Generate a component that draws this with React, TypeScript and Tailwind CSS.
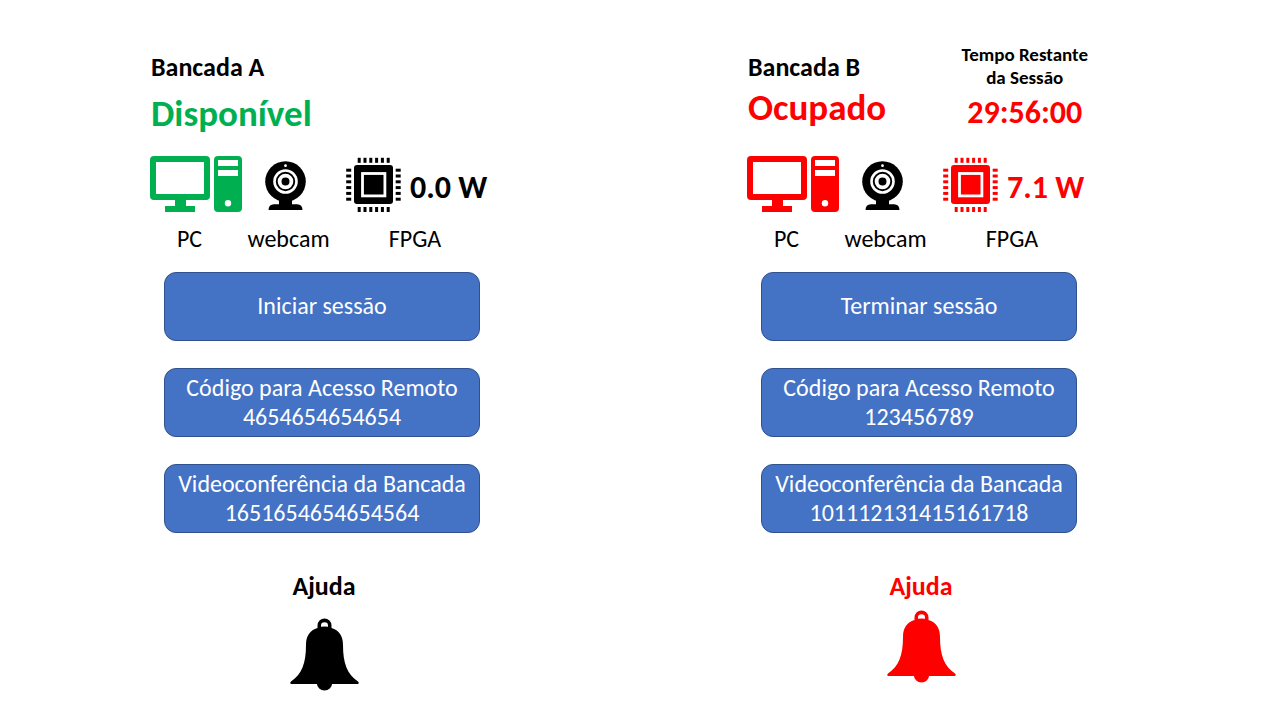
type IconProps = { className?: string };

function PcIcon({ className = "" }: IconProps) {
  return (
    <svg viewBox="0 0 92 56" width="92" height="56" fill="currentColor" fillRule="evenodd" className={className} aria-hidden="true">
      <path d="M4 0H56a4 4 0 0 1 4 4V40a4 4 0 0 1-4 4H36V50H45V56H15V50H25V44H4a4 4 0 0 1-4-4V4a4 4 0 0 1 4-4ZM6 6V38H54V6Z" />
      <path d="M68 0H88a4 4 0 0 1 4 4V52a4 4 0 0 1-4 4H68a4 4 0 0 1-4-4V4a4 4 0 0 1 4-4ZM68 4V10H88V4ZM68 14V20H88V14ZM78 44a3.2 3.2 0 1 0 0 6.4a3.2 3.2 0 1 0 0-6.4Z" />
    </svg>
  );
}

function WebcamIcon() {
  return (
    <svg viewBox="0 0 41 50" width="41" height="50" aria-hidden="true">
      <circle cx="20.5" cy="20.5" r="20.3" />
      <path d="M14 38H27V43.2H32Q37.5 43.5 37.5 49H3.5Q3.5 43.5 9 43.2H14Z" />
      <circle cx="20.5" cy="20.5" r="11" fill="none" stroke="#fff" strokeWidth="2.6" />
      <circle cx="20.5" cy="20.5" r="5.9" fill="none" stroke="#fff" strokeWidth="3.8" />
      <circle cx="20.5" cy="4.7" r="1.4" fill="#fff" />
    </svg>
  );
}

const pins = [11.7, 17.5, 23.3, 29.1, 34.9, 40.7];

function ChipIcon({ className = "" }: IconProps) {
  return (
    <svg viewBox="0 0 56 56" width="56" height="56" fill="currentColor" className={className} aria-hidden="true">
      <rect x="8" y="8" width="39" height="39" rx="3" />
      <rect x="16.5" y="16.5" width="22.4" height="22.4" fill="none" stroke="#fff" strokeWidth="2.8" />
      {pins.map((p) => (
        <g key={p}>
          <rect x={p} y="0.8" width="3" height="5" />
          <rect x={p} y="50" width="3" height="5" />
          <rect x="0.2" y={p} width="5" height="3" />
          <rect x="49.7" y={p} width="5" height="3" />
        </g>
      ))}
    </svg>
  );
}

function BellIcon() {
  return (
    <svg viewBox="0 0 69 73" width="69" height="73" fill="currentColor" aria-hidden="true">
      <path
        fillRule="evenodd"
        d="M27.5 10V7.5a7 7 0 0 1 14 0V10C49 12 53 18 53 27C53 45 57 56 68 63.5Q69.5 65 68 66H42a7.5 6.5 0 0 1-15 0H1Q-.5 65 1 63.5C12 56 16 45 16 27C16 18 20 12 27.5 10ZM31 8.8Q34.5 8 38 8.8V7.5a3.5 3.2 0 0 0-7 0Z"
      />
    </svg>
  );
}

type Bench = {
  name: string;
  status: string;
  statusClass: string;
  headerClass: string;
  busyClass: string;
  power: string;
  remaining?: string;
  action: string;
  remoteCode: string;
  videoCode: string;
  helpClass: string;
};

const benches: Bench[] = [
  {
    name: "Bancada A",
    status: "Disponível",
    statusClass: "text-[#00b050]",
    headerClass: "gap-2.5",
    busyClass: "text-black",
    power: "0.0 W",
    action: "Iniciar sessão",
    remoteCode: "4654654654654",
    videoCode: "1651654654654564",
    helpClass: "gap-4 text-black",
  },
  {
    name: "Bancada B",
    status: "Ocupado",
    statusClass: "text-[#ff0000]",
    headerClass: "gap-1",
    busyClass: "text-[#ff0000]",
    power: "7.1 W",
    remaining: "29:56:00",
    action: "Terminar sessão",
    remoteCode: "123456789",
    videoCode: "101112131415161718",
    helpClass: "gap-2 text-[#ff0000]",
  },
];

const buttonClass =
  "flex h-[69px] w-full cursor-pointer flex-col items-center justify-center rounded-xl border border-[#2f528f] bg-[#4472c4] pb-0.5 text-2xl leading-[29px] whitespace-nowrap text-white";

function BenchPanel({ bench }: { bench: Bench }) {
  return (
    <section className="flex flex-col">
      <header className="flex h-[111px] justify-between pr-[7px] pl-px">
        <div className={`flex flex-col pt-2 ${bench.headerClass}`}>
          <h2 className="text-[26px] leading-8 font-bold">{bench.name}</h2>
          <p className={`text-[37px] leading-[42px] font-bold ${bench.statusClass}`}>{bench.status}</p>
        </div>
        {bench.remaining && (
          <div className="flex flex-col items-center text-center font-bold">
            <p className="text-[19px] leading-[23px]">
              Tempo Restante
              <br />
              da Sessão
            </p>
            <p className="pt-1.5 text-[32px] leading-9 text-[#ff0000]">{bench.remaining}</p>
          </div>
        )}
      </header>

      <div className="flex h-[60px] items-center">
        <PcIcon className={bench.statusClass} />
        <div className="pt-1 pl-[23px]">
          <WebcamIcon />
        </div>
        <div className={`flex items-center gap-2 pt-0.5 pl-10 ${bench.busyClass}`}>
          <ChipIcon />
          <span className="pt-1.5 text-[32px] leading-9 font-bold whitespace-nowrap">{bench.power}</span>
        </div>
      </div>
      <div className="grid grid-cols-[79px_119px_134px] pt-2.5 text-center text-2xl leading-[30px]">
        <span>PC</span>
        <span>webcam</span>
        <span>FPGA</span>
      </div>

      <div className="flex flex-col gap-[27px] pt-[18px] pr-[18px] pl-3.5">
        <button type="button" className={buttonClass}>
          {bench.action}
        </button>
        <button type="button" className={buttonClass}>
          <span>Código para Acesso Remoto</span>
          <span>{bench.remoteCode}</span>
        </button>
        <button type="button" className={buttonClass}>
          <span>Videoconferência da Bancada</span>
          <span>{bench.videoCode}</span>
        </button>
      </div>

      <button
        type="button"
        className={`mt-[37px] flex cursor-pointer flex-col items-center self-center text-[26px] leading-8 font-bold ${bench.helpClass}`}
      >
        <span>Ajuda</span>
        <BellIcon />
      </button>
    </section>
  );
}

export default function App() {
  return (
    <main className="grid min-h-screen grid-cols-2 content-start gap-[249px] bg-white pt-[43px] pr-[185px] pl-[150px] font-['Carlito','Lato',sans-serif] text-black">
      {benches.map((bench) => (
        <BenchPanel key={bench.name} bench={bench} />
      ))}
    </main>
  );
}
